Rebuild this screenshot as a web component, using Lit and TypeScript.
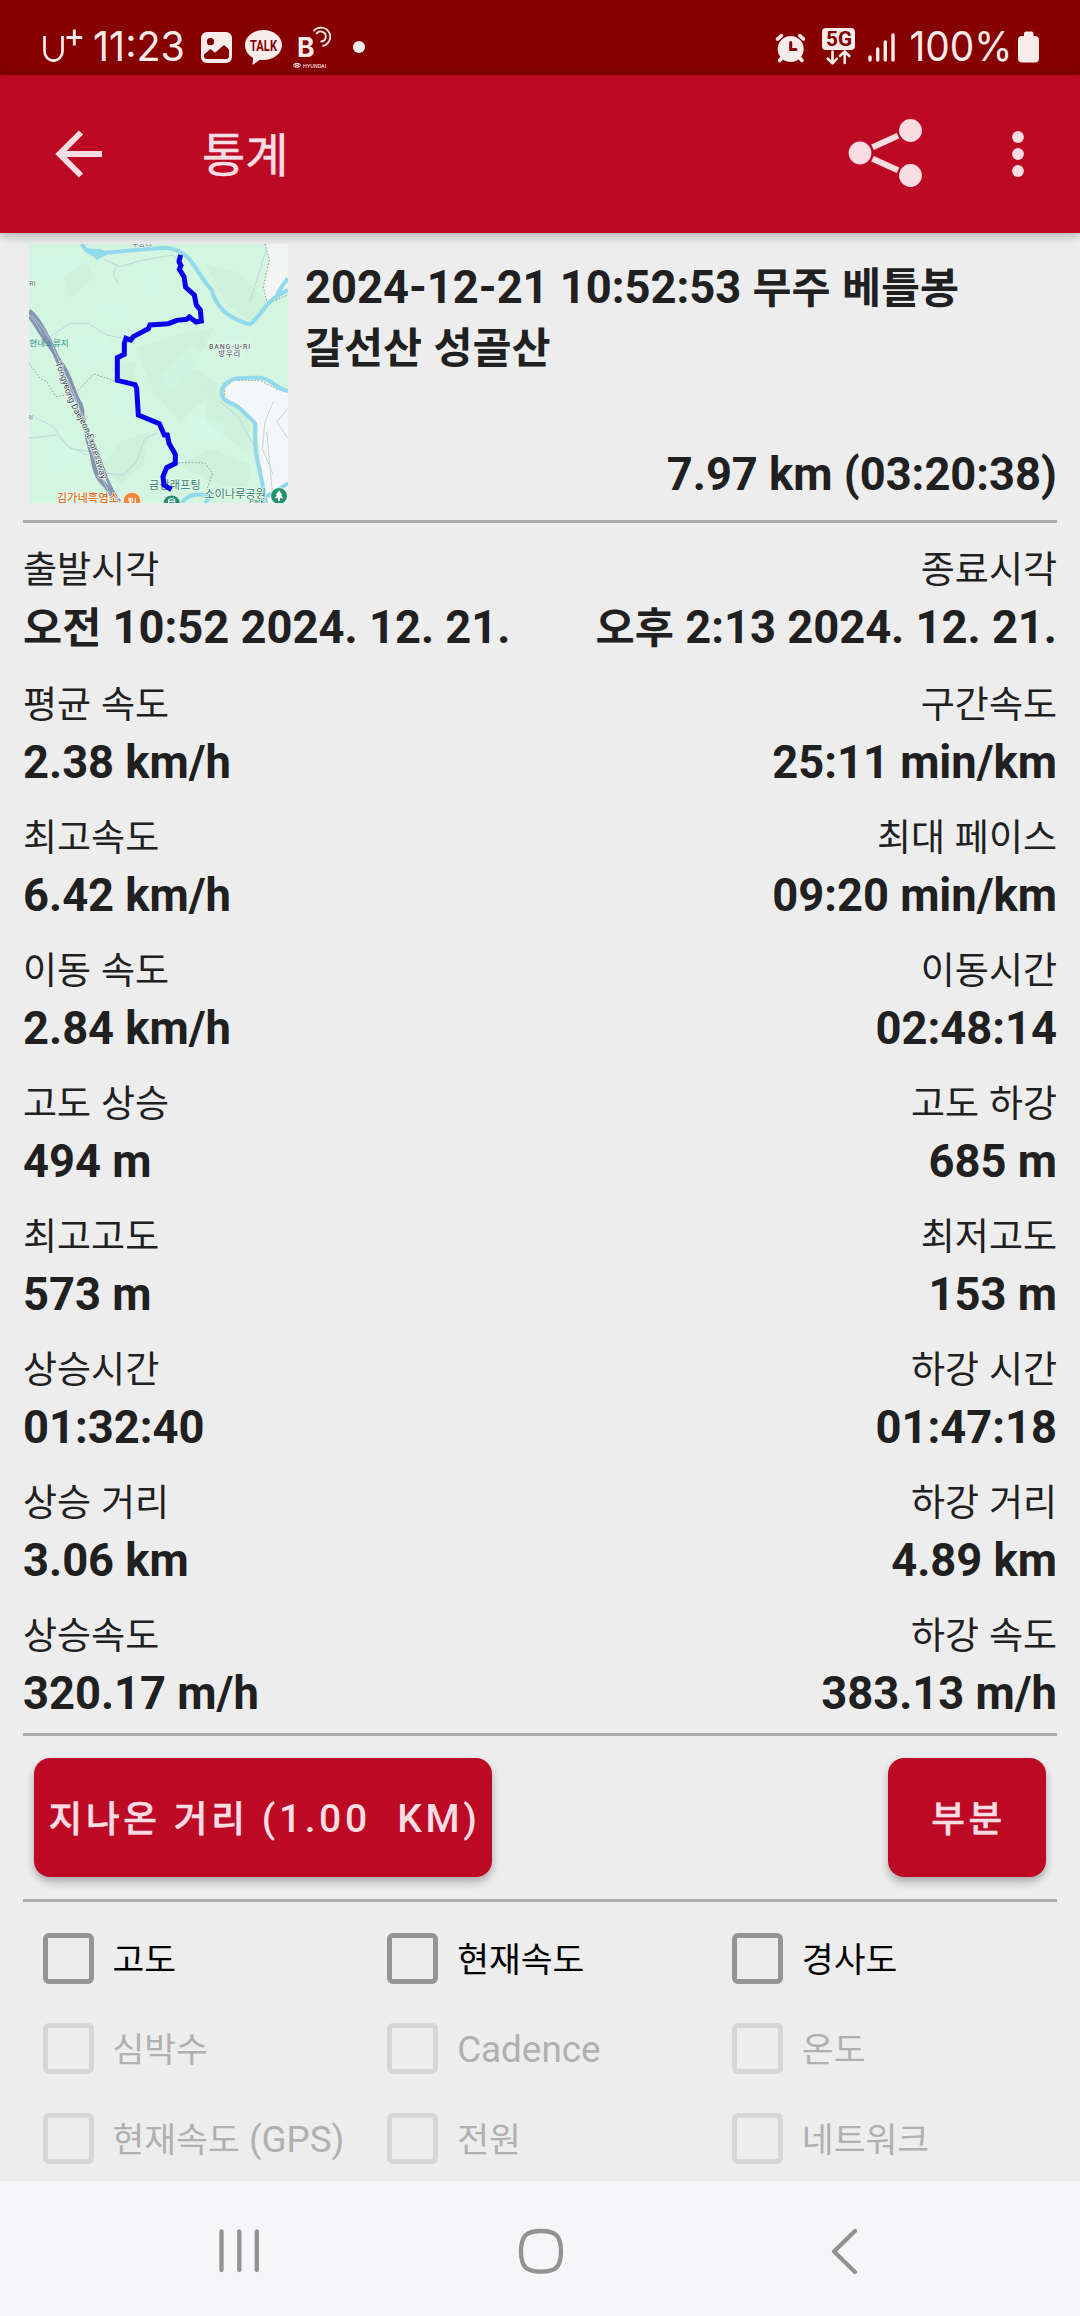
import { LitElement, html, svg, css } from "lit";
import { customElement } from "lit/decorators.js";

type Stat = { label: string; value: string };
type Option = { label: string; enabled: boolean };

const STATS: [Stat, Stat][] = [
  [{ label: "출발시각", value: "오전 10:52 2024. 12. 21." }, { label: "종료시각", value: "오후 2:13 2024. 12. 21." }],
  [{ label: "평균 속도", value: "2.38 km/h" }, { label: "구간속도", value: "25:11 min/km" }],
  [{ label: "최고속도", value: "6.42 km/h" }, { label: "최대 페이스", value: "09:20 min/km" }],
  [{ label: "이동 속도", value: "2.84 km/h" }, { label: "이동시간", value: "02:48:14" }],
  [{ label: "고도 상승", value: "494 m" }, { label: "고도 하강", value: "685 m" }],
  [{ label: "최고고도", value: "573 m" }, { label: "최저고도", value: "153 m" }],
  [{ label: "상승시간", value: "01:32:40" }, { label: "하강 시간", value: "01:47:18" }],
  [{ label: "상승 거리", value: "3.06 km" }, { label: "하강 거리", value: "4.89 km" }],
  [{ label: "상승속도", value: "320.17 m/h" }, { label: "하강 속도", value: "383.13 m/h" }],
];

const OPTIONS: Option[] = [
  { label: "고도", enabled: true },
  { label: "현재속도", enabled: true },
  { label: "경사도", enabled: true },
  { label: "심박수", enabled: false },
  { label: "Cadence", enabled: false },
  { label: "온도", enabled: false },
  { label: "현재속도 (GPS)", enabled: false },
  { label: "전원", enabled: false },
  { label: "네트워크", enabled: false },
];

// Hangul runs are set slightly smaller than the Latin text beside them.
const mixed = (text: string) =>
  text
    .split(/([\uac00-\ud7a3]+)/)
    .filter((run) => run)
    .map((run) => (/[\uac00-\ud7a3]/.test(run) ? html`<span class="ko">${run}</span>` : run));

const FONT = css`Roboto, "Noto Sans CJK KR", sans-serif`;

@customElement("status-bar")
class StatusBar extends LitElement {
  static styles = css`
    :host { display: block; height: 75px; background: #860000; }
    svg { display: block; }
    .fg { fill: #f8eceb; }
    .cut { fill: #860000; }
    .line { fill: none; stroke: #f8eceb; }
    .clock { font: 400 40.5px Inter, sans-serif; fill: #f8eceb; }
    .bold { font: 700 14px Roboto, sans-serif; }
    .brand { font: 700 26.5px Inter, sans-serif; }
    .tiny { font: 500 5.4px Inter, sans-serif; }
    .net { font: 700 21px Roboto, sans-serif; }
  `;
  render() {
    return html`<svg width="1080" height="75" viewBox="0 0 1080 75">
      <path class="line" stroke-width="2.700" d="M44.500 36V51.300a9 9.300 0 0 0 18 0V36" />
      <path class="line" stroke-width="2.900" d="M74.300 29.500V45.500M66.500 37.500H82.200" />
      <text class="clock" x="93" y="61" textLength="92" lengthAdjust="spacingAndGlyphs">11:23</text>
      <rect class="fg" x="201" y="32" width="31" height="31" rx="6" />
      <circle class="cut" cx="210.500" cy="41.700" r="3.600" />
      <path class="cut" d="M204 54.500 210.500 49l4.500 3.800 9-7.800 5 4.600V56q0 3-3 3H207q-3 0-3-3Z" />
      <path class="fg" d="M263.500 30c10.300 0 18.500 6.700 18.500 15s-8.200 15-18.500 15q-2 0-3.600-.3L252.500 65l.6-7.200C248 55 245 50.500 245 45c0-8.300 8.200-15 18.500-15Z" />
      <text class="cut bold" x="250" y="50.500" textLength="27" lengthAdjust="spacingAndGlyphs">TALK</text>
      <text class="fg brand" x="297" y="57">B</text>
      <path class="line" stroke-width="1.800" d="M313.500 31.200A9.300 9.300 0 1 1 322.500 46M316.300 34.200A5 5 0 1 1 320.500 41.500" />
      <text class="fg tiny" x="303" y="67.500" textLength="23" lengthAdjust="spacingAndGlyphs">HYUNDAI</text>
      <ellipse class="line" cx="297" cy="65.300" rx="3.400" ry="2" stroke-width="1" />
      <path class="line" stroke-width="1" d="M295.800 63.500V67M298.200 63.500V67M295.800 65.300H298.200" />
      <circle class="fg" cx="359" cy="47" r="6.100" />

      <circle class="fg" cx="790.700" cy="49" r="13" />
      <path class="line" stroke-width="3.600" stroke-linecap="round" d="M777.500 39 781.500 35.700M803.500 39 799.800 35.700M782.500 57 779.600 60.500M799 57l3 3.500" />
      <path d="M790.700 42.500V49.500H796" fill="none" stroke="#860000" stroke-width="3" stroke-linecap="round" />
      <rect class="fg" x="822" y="28" width="33" height="22" rx="4" />
      <text class="cut net" x="826" y="46.300" textLength="26" lengthAdjust="spacingAndGlyphs">5G</text>
      <path class="line" stroke-width="2.600" stroke-linecap="round" stroke-linejoin="round" d="M832.500 51.500V63M827.800 58.700 832.500 63.300 837 58.700M844.700 63V51.500M840 56 844.700 51.300 849.300 56" />
      <path class="line" stroke-width="3.400" stroke-linecap="round" d="M870 57V60M877.700 49V60M885.300 42V60M893 35V60" />
      <text class="clock" x="909.500" y="61" textLength="103" lengthAdjust="spacingAndGlyphs">100%</text>
      <path class="fg" d="M1024 36V33.500q0-2 2-2h5.500q2 0 2 2V36h1.500q4 0 4 4V58.500q0 4-4 4h-13q-4 0-4-4V40q0-4 4-4Z" />
    </svg>`;
  }
}

@customElement("app-bar")
class AppBar extends LitElement {
  static styles = css`
    :host {
      display: flex; align-items: center; height: 158px; padding: 0 50px; box-sizing: border-box;
      background: #bd0a24; color: #fadde3; box-shadow: 0 2px 11px rgba(0, 0, 0, 0.3); position: relative;
    }
    svg { display: block; fill: currentColor; }
    .stroke { fill: none; stroke: currentColor; stroke-width: 6; }
    .title { flex: 1; margin: 4px 0 0 92px; font: 400 47px/60px ${FONT}; -webkit-text-stroke: 0.5px currentColor; }
    .share { margin-right: 83px; }
  `;
  render() {
    return html`
      <svg width="60" height="60" viewBox="0 0 60 60">
        <path class="stroke" d="M52 30H11M31 8.500 9.500 30 31 51.500" />
      </svg>
      <div class="title">통계</div>
      <svg class="share" width="80" height="80" viewBox="0 0 80 80">
        <circle cx="16" cy="39" r="11.400" /><circle cx="66.500" cy="16.500" r="11.400" /><circle cx="66.500" cy="61.500" r="11.400" />
        <path class="stroke" d="M28.500 33.300 54 21.700M28.500 44.700 54 56.300" />
      </svg>
      <svg width="23" height="60" viewBox="0 0 23 60">
        <circle cx="11" cy="13" r="5.900" /><circle cx="11" cy="30" r="5.900" /><circle cx="11" cy="47" r="5.900" />
      </svg>`;
  }
}

@customElement("route-map")
class RouteMap extends LitElement {
  static styles = css`
    :host { display: block; width: 259px; height: 259px; }
    svg { display: block; overflow: hidden; }
    text { font-family: Roboto, "Noto Sans CJK KR", sans-serif; }
    .none { fill: none; }
    .river { fill: none; stroke: #93d9ec; stroke-width: 12; stroke-linejoin: round; }
    .path { fill: none; stroke: #c3d4dc; stroke-width: 3; }
    .border { fill: none; stroke: #8aa094; stroke-width: 3; stroke-dasharray: 5 5; }
    .route { fill: none; stroke: #0a00f0; stroke-width: 15; stroke-linejoin: miter; stroke-linecap: square; }
    .halo { paint-order: stroke; stroke: #eefaf2; stroke-width: 4px; stroke-linejoin: round; }
    .grey { fill: #62696f; }
    .teal { fill: #2c8e94; }
    .green { fill: #2d8069; }
    .orange { fill: #e0702c; }
  `;
  render() {
    const glades = [
      "M27 60 L150 40 L190 90 L90 150 L27 120Z", "M230 210 L320 190 L330 260 L250 290Z",
      "M150 290 L260 300 L280 380 L190 400Z", "M380 60 L430 150 L400 200 L330 110Z",
      "M280 460 L330 480 L340 560 L260 530Z", "M500 540 L620 560 L600 620 L500 640Z",
      "M60 560 L170 600 L180 700 L80 720Z", "M420 430 L520 330 L560 370 L450 470Z",
      "M600 250 L700 300 L660 380 L590 330Z",
    ];
    const hills = [
      "M560 90 L650 110 L740 200 L700 260 L620 210Z", "M350 340 L470 300 L580 280 L520 400 L600 450 L480 560 L400 470Z",
      "M560 440 L620 480 L690 560 L680 650 L560 560Z", "M300 620 L390 590 L370 690 L300 750 L250 690Z",
      "M130 120 L200 80 L220 130 L150 190Z", "M480 690 L570 640 L690 690 L680 770 L570 740Z",
      "M270 400 L350 380 L340 440Z",
    ];
    return html`<svg width="259" height="259" viewBox="27 27 777 777">
      <rect x="27" y="27" width="777" height="777" fill="#d4f5df" />
      ${hills.map((d) => svg`<path d=${d} fill="#c9efd8" opacity="0.6" />`)}
      ${glades.map((d) => svg`<path d=${d} fill="#cffae6" opacity="0.5" />`)}
      <path d="M735 27 748 75 730 155 740 205 770 190 804 150V27Z" fill="#f3f5f5" />
      <path class="river" stroke-width="7" d="M804 130Q775 165 765 195" />
      <path d="M612 465 640 438 720 432 770 460 804 468V804H745L722 690 712 580 690 540 645 502 616 490Z" fill="#f5f6f7" />
      <path d="M760 500 735 560 727 640 760 720 M740 590 760 800 M804 520 770 560 804 610" class="path" />
      <path class="border" d="M735 27 748 75 730 155 742 205 804 180M27 385 60 430 80 440 108 485 165 475 222 417 290 440M465 685 500 682 555 684 578 715 560 765M612 490 615 455 640 436 720 436 775 465M620 492 690 545" />
      <path class="path" d="M250 72 300 95 370 75 460 60 475 80M290 90 280 120 295 145M90 305 150 265 205 265 260 300 310 310M27 610 110 600 150 640 210 650M225 660 265 715 310 720 350 680 375 610 410 595M40 545 100 575 140 630 200 660M600 500 655 545 700 630M690 200 740 40" />
      <path class="river" d="M185 27Q205 62 235 55C300 50 360 42 440 38C520 50 520 105 575 165C590 225 640 255 690 268C735 230 730 200 804 165" />
      <path d="M196 40 230 75 270 55 240 42Z" fill="#93d9ec" />
      <path class="river" d="M804 468C765 462 760 432 720 428L650 430C615 438 600 460 606 480C612 505 640 500 665 525L706 565C704 610 705 660 718 700L738 804" />
      <path class="river" stroke-width="7" d="M485 804Q510 765 570 785L555 804M740 785 804 745" />
      <g class="none" stroke="#8594b0">
        <path stroke-width="15" d="M27 228C60 255 90 320 118 385" />
        <path stroke-width="9" d="M27 245C55 280 65 310 115 370C155 420 160 470 190 530" />
        <path stroke-width="14" d="M115 375C150 430 155 470 182 510C190 540 185 560 200 590C205 640 215 640 220 680C235 760 260 730 285 804" />
        <path stroke-width="8" d="M215 610C245 670 255 745 300 800" />
        <path stroke="#b9c5d8" stroke-width="3" d="M35 240C90 290 110 370 150 450S190 590 215 650S250 750 285 800" />
      </g>
      <defs><path id="road" d="M105 385C130 440 135 480 165 535C200 590 215 640 247 745" /></defs>
      <text class="halo" font-size="27" fill="#3e4757"><textPath href="#road" textLength="376" lengthAdjust="spacingAndGlyphs">Tongyeong Daejeon Expressway</textPath></text>
      <text class="grey halo" font-size="22" x="335" y="32">수동리</text>
      <text class="grey halo" font-size="21" x="28" y="153">RI</text>
      <text class="grey halo" font-size="21" x="20" y="554">RI</text>
      <text class="teal" font-size="25.500" x="28" y="333" textLength="118">현내소류지</text>
      <text class="grey halo" font-size="21" font-weight="500" x="567" y="342" textLength="124">BANG-U-RI</text>
      <text class="grey halo" font-size="22" font-weight="500" x="595" y="364" textLength="66">방우리</text>
      <text class="green halo" font-size="33" x="387" y="763" textLength="155">금산래프팅</text>
      <text class="green halo" font-size="34" x="553" y="788" textLength="185">소이나루공원</text>
      <text class="green halo" font-size="22" x="688" y="808">Park</text>
      <text class="orange halo" font-size="34" font-weight="500" x="110" y="800" textLength="187">김가네흑염소</text>
      <circle cx="336" cy="798" r="26" fill="#f0853c" stroke="#fff" stroke-width="2" />
      <path class="none" d="M327 788V797Q327 801 332 801V812M332 788V801M337 788V801M346 812V790" stroke="#fff" stroke-width="3.500" />
      <circle cx="455" cy="806" r="26" fill="#24916d" stroke="#fff" stroke-width="2" />
      <path class="none" d="M446 804V795Q455 786 464 795V804M444 799H466" stroke="#fff" stroke-width="3.500" />
      <circle cx="777" cy="783" r="25" fill="#24916d" stroke="#fff" stroke-width="2" />
      <path d="M777 766 787 780H783L790 790H780V798H774V790H764L771 780H767Z" fill="#fff" />
      <path class="route" d="M480 67 477 80 483 92 478 103 492 125 497 157 523 180 529 210 541 225 544 258 528 261 508 246 500 253 470 256 445 266 390 270 385 281 340 305 332 315 318 310 313 325 313 358 292 368 292 436 345 449 350 460 355 540 418 566 433 600 442 600 447 625 466 658 466 685 440 698 429 725 432 750 448 760" />
    </svg>`;
  }
}

@customElement("nav-bar")
class NavBar extends LitElement {
  static styles = css`
    :host { display: grid; grid-template-columns: 1fr 1fr 1fr; align-items: center; justify-items: center; height: 135px; padding: 0 85px; background: #f6f6f9; }
    svg { display: block; fill: none; stroke: #929292; stroke-width: 4.3; stroke-linecap: round; stroke-linejoin: round; }
  `;
  render() {
    return html`
      <svg width="60" height="60" viewBox="0 0 60 60"><path d="M14.500 12.500V51M32.300 12.500V51M49.800 12.500V51" /></svg>
      <svg width="60" height="60" viewBox="0 0 60 60"><path d="M31 12C46 12 51 17 51 32.300S46 52.700 31 52.700S11 47.600 11 32.300S16 12 31 12Z" /></svg>
      <svg width="60" height="60" viewBox="0 0 60 60"><path d="M42 12 21 32.500 42 53" /></svg>`;
  }
}

@customElement("app-root")
class AppRoot extends LitElement {
  static styles = css`
    :host { display: flex; flex-direction: column; width: 1080px; height: 2316px; overflow: hidden; background: #ededed; color: #202020; font-family: ${FONT}; }
    .ko { font-size: 0.94em; line-height: 0; }
    .content { flex: 1; min-height: 0; overflow: hidden; padding: 0 23px; }
    .summary { display: flex; height: 287px; box-sizing: border-box; padding: 11px 0 0 6px; }
    .text { flex: 1; display: flex; flex-direction: column; margin-left: 17px; font-weight: 700; font-size: 45.3px; line-height: 60px; }
    .name { margin-top: 14px; width: 700px; }
    .name .ko { font-size: 0.937em; }
    .total { margin-top: 67px; text-align: right; }
    .rule { height: 3px; background: #aaa; }
    .stats { height: 1210px; box-sizing: border-box; padding-top: 20px; }
    .row { display: flex; justify-content: space-between; height: 133px; }
    .row:first-child { height: 135px; }
    .cell:last-child { text-align: right; }
    .label { font-size: 39.400px; line-height: 53px; padding-bottom: 2px; }
    .value { font-size: 45.3px; line-height: 60px; font-weight: 700; }
    .actions { display: flex; justify-content: space-between; height: 163px; box-sizing: border-box; padding: 22px 11px; }
    button {
      height: 119px; border: 0; border-radius: 16px; padding: 2px 0 0 3px; background: #bd0a24; color: #fadde3; white-space: pre;
      font: 500 39px/50px ${FONT}; letter-spacing: 3.600px; box-shadow: 0 5px 9px rgba(0, 0, 0, 0.28);
    }
    button .ko { -webkit-text-stroke: 0.5px currentColor; }
    .wide { width: 458px; }
    .small { width: 158px; }
    .options { display: grid; grid-template-columns: repeat(3, 1fr); grid-auto-rows: 90px; padding-top: 11px; }
    .option { display: flex; align-items: center; gap: 19px; padding-left: 19.5px; font-size: 36.8px; line-height: 50px; color: #000; white-space: nowrap; }
    .caption { padding-top: 4px; }
    .box { width: 51px; height: 51px; box-sizing: border-box; border: 5.500px solid #949494; border-radius: 6px; flex: none; }
    .disabled { color: #b0b0b0; }
    .disabled .box { border-color: #d6d6d6; }
  `;
  render() {
    return html`
      <status-bar></status-bar>
      <app-bar></app-bar>
      <div class="content">
        <div class="summary">
          <route-map></route-map>
          <div class="text">
            <div class="name">${mixed("2024-12-21 10:52:53 무주 베틀봉 갈선산 성골산")}</div>
            <div class="total">7.97 km (03:20:38)</div>
          </div>
        </div>
        <div class="rule"></div>
        <div class="stats">
          ${STATS.map((pair) => html`<div class="row">
            ${pair.map((s) => html`<div class="cell">
              <div class="label">${mixed(s.label)}</div>
              <div class="value">${mixed(s.value)}</div>
            </div>`)}
          </div>`)}
        </div>
        <div class="rule"></div>
        <div class="actions">
          <button class="wide">${mixed("지나온 거리 (1.00  KM)")}</button>
          <button class="small">${mixed("부분")}</button>
        </div>
        <div class="rule"></div>
        <div class="options">
          ${OPTIONS.map((o) => html`<div class="option ${o.enabled ? "" : "disabled"}">
            <span class="box"></span><span class="caption">${mixed(o.label)}</span>
          </div>`)}
        </div>
      </div>
      <nav-bar></nav-bar>`;
  }
}
